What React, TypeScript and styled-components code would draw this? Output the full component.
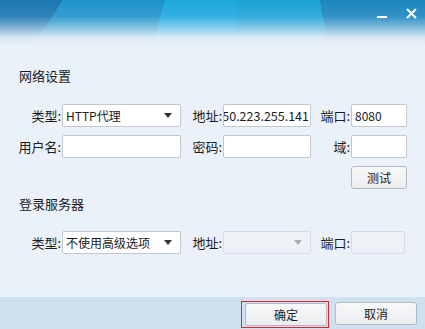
import styled, { createGlobalStyle } from 'styled-components';

const GlobalStyle = createGlobalStyle`
    html, body {
        margin: 0;
        padding: 0;
        overflow: hidden;
    }

    body {
        font-family: 'Noto Sans CJK SC', 'Noto Sans', sans-serif;
        font-size: 12px;
        color: #1b1b1b;
    }
`;

const BG = '#eaf1f9';

const Window = styled.div`
    width: 425px;
    height: 329px;
    display: flex;
    flex-direction: column;
    background: ${BG};
    overflow: hidden;
`;

const TitleBar = styled.div`
    display: grid;
    height: 46px;
    flex: none;

    & > * {
        grid-area: 1 / 1;
    }
`;

const WindowControls = styled.div`
    display: flex;
    justify-content: flex-end;
    align-items: flex-start;
    gap: 19px;
    padding: 8px 8px 0 0;
    z-index: 1;
`;

const ControlButton = styled.button`
    width: 11px;
    height: 11px;
    padding: 0;
    border: 0;
    background: none;
    display: flex;
    align-items: center;
    justify-content: center;
    color: #fff;
    cursor: pointer;
`;

const Content = styled.div`
    flex: 1;
    padding: 22px 0 0 19px;
    display: flex;
    flex-direction: column;
`;

const SectionTitle = styled.div<{ $gap: number }>`
    font-size: 13px;
    line-height: 16px;
    margin-bottom: ${({ $gap }) => $gap}px;
`;

const FormGrid = styled.div<{ $after?: number }>`
    display: grid;
    grid-template-columns: 43px 119px 42px 88px 40px 56px;
    grid-auto-rows: 23px;
    row-gap: 8px;
    margin-bottom: ${({ $after = 0 }) => $after}px;
`;

const Label = styled.label`
    display: flex;
    align-items: center;
    justify-content: flex-end;
    padding-right: 1px;
    white-space: nowrap;
    font-size: 13px;
`;

const Field = styled.div<{ $disabled?: boolean; $width?: number; $flush?: boolean }>`
    box-sizing: border-box;
    width: ${({ $width }) => ($width ? `${$width}px` : 'auto')};
    height: 23px;
    display: flex;
    align-items: center;
    padding: ${({ $flush }) => ($flush ? '0 1px 0 0' : '0 3px')};
    border: 1px solid ${({ $disabled }) => ($disabled ? '#d6dce3' : '#c2c8cf')};
    border-radius: 2px;
    background: ${({ $disabled }) => ($disabled ? '#eef2f7' : '#fff')};
    white-space: nowrap;
    overflow: hidden;
    font-size: 12px;
`;

const OverflowText = styled.div`
    width: 100%;
    display: flex;
    justify-content: flex-end;
    overflow: hidden;
    font-size: 12.5px;
`;

const SelectText = styled.span`
    flex: 1;
    overflow: hidden;
`;

const Arrow = styled.span<{ $disabled?: boolean }>`
    width: 0;
    height: 0;
    margin-right: 5px;
    border-left: 4px solid transparent;
    border-right: 4px solid transparent;
    border-top: 5px solid ${({ $disabled }) => ($disabled ? '#a9adb2' : '#333')};
`;

const Button = styled.button`
    box-sizing: border-box;
    height: 23px;
    padding: 0;
    border: 1px solid #b2b9c1;
    border-radius: 3px;
    background: linear-gradient(#f7f8f9, #ebedf0);
    font-family: inherit;
    font-size: 12px;
    color: #1b1b1b;
`;

const TestCell = styled.div`
    grid-column: 6;
    display: flex;
`;

const TestButton = styled(Button)`
    flex: 1;
`;

const Footer = styled.div`
    flex: none;
    height: 32px;
    display: flex;
    justify-content: flex-end;
    align-items: flex-start;
    padding: 5px 8px 0 0;
    gap: 6px;
    background: #cfe1f1;
    box-sizing: border-box;
`;

const FocusRing = styled.div`
    margin-top: -1px;
    padding: 1px 1px 1px 3px;
    border: 1px solid #e3262b;
    display: flex;
`;

const FooterButton = styled(Button)`
    width: 82px;
    height: 23px;
`;

const HeaderArt = () => (
    <svg width='425' height='46' viewBox='0 0 425 46' preserveAspectRatio='none'>
        <defs>
            <linearGradient id='fade' x1='0' y1='0' x2='0' y2='1'>
                <stop offset='0' stopColor={BG} stopOpacity='0' />
                <stop offset='0.35' stopColor={BG} stopOpacity='0.1' />
                <stop offset='0.6' stopColor={BG} stopOpacity='0.5' />
                <stop offset='0.82' stopColor={BG} stopOpacity='0.92' />
                <stop offset='1' stopColor={BG} stopOpacity='1' />
            </linearGradient>
        </defs>
        <rect width='425' height='46' fill='#1c86c0' />
        <polygon points='0,0 63,0 33,46 0,46' fill='#1b76b0' />
        <polygon points='63,0 165,0 151,46 33,46' fill='#1f93cd' />
        <polygon points='165,0 238,0 236,46 151,46' fill='#1ea8dd' />
        <polygon points='238,0 320,0 328,46 236,46' fill='#1ea2d8' />
        <polygon points='320,0 425,0 425,46 328,46' fill='#1c86bf' />
        <rect width='425' height='46' fill='url(#fade)' />
    </svg>
);

const App = () => (
    <Window>
        <GlobalStyle />
        <TitleBar>
            <HeaderArt />
            <WindowControls>
                <ControlButton aria-label='最小化'>
                    <svg width='10' height='10' viewBox='0 0 10 10'>
                        <rect x='0' y='7' width='10' height='2' fill='currentColor' />
                    </svg>
                </ControlButton>
                <ControlButton aria-label='关闭'>
                    <svg width='11' height='11' viewBox='0 0 11 11'>
                        <path d='M1 1 L10 10 M10 1 L1 10' stroke='currentColor' strokeWidth='2' />
                    </svg>
                </ControlButton>
            </WindowControls>
        </TitleBar>

        <Content>
            <SectionTitle $gap={20}>网络设置</SectionTitle>
            <FormGrid $after={7}>
                <Label>类型:</Label>
                <Field>
                    <SelectText>HTTP代理</SelectText>
                    <Arrow />
                </Field>
                <Label>地址:</Label>
                <Field $flush>
                    <OverflowText>50.223.255.141</OverflowText>
                </Field>
                <Label>端口:</Label>
                <Field>8080</Field>

                <Label>用户名:</Label>
                <Field />
                <Label>密码:</Label>
                <Field />
                <Label>域:</Label>
                <Field />

                <TestCell>
                    <TestButton>测试</TestButton>
                </TestCell>
            </FormGrid>

            <SectionTitle $gap={19}>登录服务器</SectionTitle>
            <FormGrid>
                <Label>类型:</Label>
                <Field>
                    <SelectText>不使用高级选项</SelectText>
                    <Arrow />
                </Field>
                <Label>地址:</Label>
                <Field $disabled>
                    <SelectText />
                    <Arrow $disabled />
                </Field>
                <Label>端口:</Label>
                <Field $disabled $width={54} />
            </FormGrid>
        </Content>

        <Footer>
            <FocusRing>
                <FooterButton>确定</FooterButton>
            </FocusRing>
            <FooterButton>取消</FooterButton>
        </Footer>
    </Window>
);

export default App;
